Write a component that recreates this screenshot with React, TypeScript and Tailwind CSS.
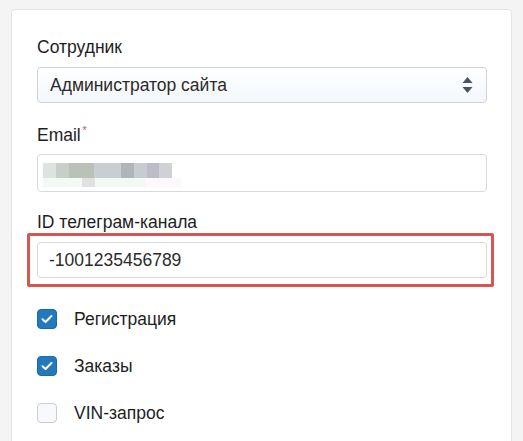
import React from "react";

function Check({ checked, label }: { checked: boolean; label: string }) {
  return (
    <div className="flex items-center h-[20px]">
      {checked ? (
        <div className="w-[20px] h-[20px] rounded-[4px] bg-[#2479bd] border border-[#1b6aa8] flex items-center justify-center">
          <svg width="12" height="10" viewBox="0 0 12 10">
            <path d="M1.5 5.2 L4.5 8 L10.5 2" fill="none" stroke="#fff" strokeWidth="2" strokeLinecap="round" strokeLinejoin="round" />
          </svg>
        </div>
      ) : (
        <div className="w-[20px] h-[20px] rounded-[4px] bg-[#f7f9fc] border border-[#c9cdd3]" />
      )}
      <span className="ml-[17px] text-[17.5px] leading-[20px] text-[#1e1e1e]">{label}</span>
    </div>
  );
}

export default function App() {
  return (
    <div className="w-[523px] h-[441px] bg-[#f4f4f4] overflow-hidden pt-[9px] pl-[11px]" style={{ fontFamily: '"Liberation Sans", Arial, sans-serif' }}>
      <div className="w-[501px] h-[460px] bg-white border border-[#e3e3e3] rounded-[4px] pt-[27px] pl-[25px] pr-[24px]">
        <div className="text-[17.5px] text-[#1e1e1e] leading-[20px]">Сотрудник</div>
        <div className="mt-[10px] h-[36px] w-[450px] rounded-[4px] border border-[#cfd3d8] bg-gradient-to-b from-white to-[#f3f7fb] flex items-center justify-between pl-[12px] pr-[13px]">
          <span className="text-[17.5px] text-[#2b2b2b]">Администратор сайта</span>
          <svg width="11" height="18" viewBox="0 0 11 18">
            <path d="M5.5 1 L10.5 7 L0.5 7 Z" fill="#4a5563" />
            <path d="M5.5 17 L10.5 11 L0.5 11 Z" fill="#4a5563" />
          </svg>
        </div>
        <div className="mt-[22px] text-[17.5px] text-[#1e1e1e] leading-[20px] relative inline-block">
          Email<span className="absolute -right-[6px] -top-[5px] text-[#e0524d] text-[11px]">*</span>
        </div>
        <div className="mt-[6px] h-[38px] w-[450px] rounded-[4px] border border-[#d6d9dd] bg-white relative">
          <div className="absolute left-[5px] top-[8px] flex">
            <div className="w-[13px] h-[15px] bg-[#dde3de]" />
            <div className="w-[13px] h-[15px] bg-[#c8cfc9]" />
            <div className="w-[25px] h-[15px] bg-[#b9c1b9]" />
            <div className="w-[27px] h-[15px] bg-[#c9ced2]" />
            <div className="w-[13px] h-[15px] bg-[#b0b5b8]" />
            <div className="w-[13px] h-[15px] bg-[#c8ccd1]" />
            <div className="w-[12px] h-[15px] bg-[#bcbcc8]" />
            <div className="w-[13px] h-[15px] bg-[#d0d1d7]" />
          </div>
          <div className="absolute left-[5px] top-[23px] flex">
            <div className="w-[39px] h-[9px] bg-[#f4f9f5]" />
            <div className="w-[13px] h-[9px] bg-[#e0e1e0]" />
            <div className="w-[51px] h-[9px] bg-[#f4f9f5]" />
            <div className="w-[35px] h-[9px] bg-[#fdf8fd]" />
          </div>
        </div>
        <div className="mt-[20px] text-[17.5px] text-[#1e1e1e] leading-[20px]">ID телеграм-канала</div>
        <div className="mt-[1px] -ml-[10px] w-[467px] border-[3px] border-[#d9534f] rounded-[2px] p-[6px] pl-[7px] pr-[5px]">
          <div className="h-[36px] w-[450px] rounded-[4px] border border-[#d6d9dd] bg-white flex items-center pl-[11px]">
            <span className="text-[17.5px] text-[#2b2b2b]">-1001235456789</span>
          </div>
        </div>
        <div className="mt-[22px] flex flex-col gap-[27px]">
          <Check checked label="Регистрация" />
          <Check checked label="Заказы" />
          <Check checked={false} label="VIN-запрос" />
        </div>
      </div>
    </div>
  );
}
